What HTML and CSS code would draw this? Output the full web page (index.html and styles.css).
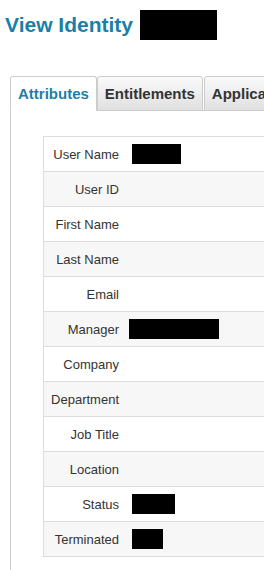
FILE: index.html
```html
<!DOCTYPE html>
<html lang="en">
<head>
    <meta charset="UTF-8">
    <meta name="viewport" content="width=device-width, initial-scale=1.0">
    <title>View Identity</title>
    <link rel="stylesheet" href="styles.css">
</head>
<body>
    <h1 class="page-title">
        <span>View Identity</span>
        <span class="redacted title-redacted"></span>
    </h1>

    <div class="tabs">
        <div class="tab-buttons">
            <button class="tab-button active">Attributes</button>
            <button class="tab-button">Entitlements</button>
            <button class="tab-button">Applications</button>
        </div>

        <div class="tab-panel">
            <table class="attributes">
                <tr>
                    <td class="label">User Name</td>
                    <td class="value"><span class="redacted" style="width: 49px"></span></td>
                </tr>
                <tr>
                    <td class="label">User ID</td>
                    <td class="value"></td>
                </tr>
                <tr>
                    <td class="label">First Name</td>
                    <td class="value"></td>
                </tr>
                <tr>
                    <td class="label">Last Name</td>
                    <td class="value"></td>
                </tr>
                <tr>
                    <td class="label">Email</td>
                    <td class="value"></td>
                </tr>
                <tr>
                    <td class="label">Manager</td>
                    <td class="value"><span class="redacted shift" style="width: 90px"></span></td>
                </tr>
                <tr>
                    <td class="label">Company</td>
                    <td class="value"></td>
                </tr>
                <tr>
                    <td class="label">Department</td>
                    <td class="value"></td>
                </tr>
                <tr>
                    <td class="label">Job Title</td>
                    <td class="value"></td>
                </tr>
                <tr>
                    <td class="label">Location</td>
                    <td class="value"></td>
                </tr>
                <tr>
                    <td class="label">Status</td>
                    <td class="value"><span class="redacted" style="width: 43px"></span></td>
                </tr>
                <tr>
                    <td class="label">Terminated</td>
                    <td class="value"><span class="redacted" style="width: 31px"></span></td>
                </tr>
            </table>
        </div>
    </div>
</body>
</html>
```

FILE: styles.css
```css
html, body {
    overflow: hidden;
}
body {
    font-family: 'Liberation Sans', Arial, sans-serif;
    margin: 0;
    padding: 10px 0 0 5px;
    background: #ffffff;
    color: #333333;
}
.page-title {
    display: flex;
    align-items: center;
    gap: 7px;
    margin: 0;
    height: 30px;
    font-size: 21px;
    font-weight: 700;
    color: #1b7fa6;
}
.redacted {
    display: inline-block;
    height: 20px;
    background: #000000;
    vertical-align: middle;
}
.title-redacted {
    width: 77px;
    height: 30px;
}
.redacted.shift {
    margin-left: -3px;
}
.tabs {
    margin: 36px 0 0 5px;
    width: 520px;
}
.tab-buttons {
    display: flex;
    gap: 1px;
    position: relative;
    z-index: 1;
}
.tab-button {
    font-family: inherit;
    font-size: 15px;
    font-weight: 700;
    height: 35px;
    padding: 0 7px;
    margin: 0 0 -1px 0;
    border: 1px solid #cccccc;
    border-radius: 3px 3px 0 0;
    background: linear-gradient(#fafafa, #e0e0e0);
    color: #333333;
}
.tab-button.active {
    background: #ffffff;
    border-bottom-color: #ffffff;
    color: #1b7fa6;
    margin-right: -1px;
}
.tab-panel {
    border: 1px solid #cccccc;
    padding: 25px 0 40px 32px;
}
.attributes {
    border-collapse: collapse;
    width: 460px;
    font-size: 13px;
    border: 1px solid #dddddd;
}
.attributes tr {
    height: 35px;
    background: #ffffff;
}
.attributes tr:nth-child(even) {
    background: #f7f7f7;
}
.attributes td {
    border-top: 1px solid #dddddd;
    vertical-align: middle;
}
.attributes .label {
    width: 75px;
    padding: 0 7px 0 0;
    text-align: right;
    color: #333333;
}
.attributes .value {
    padding: 0 0 0 6px;
}
```
